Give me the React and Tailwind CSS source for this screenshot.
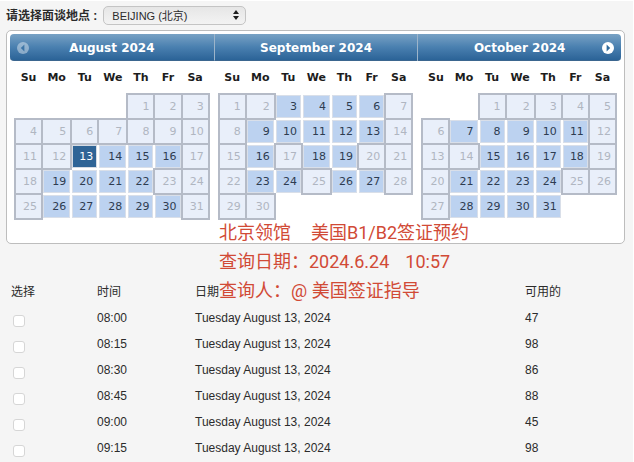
import React, { useState } from "react";

const WEEKDAYS = ["Su", "Mo", "Tu", "We", "Th", "Fr", "Sa"];

const MONTHS = [
  {
    name: "August 2024",
    offset: 4,
    days: 31,
    open: [13, 14, 15, 16, 19, 20, 21, 22, 26, 27, 28, 29, 30],
  },
  {
    name: "September 2024",
    offset: 0,
    days: 30,
    open: [3, 4, 5, 6, 9, 10, 11, 12, 13, 16, 18, 19, 23, 24, 26, 27],
  },
  {
    name: "October 2024",
    offset: 2,
    days: 31,
    open: [7, 8, 9, 10, 11, 15, 16, 17, 18, 21, 22, 23, 24, 28, 29, 30, 31],
  },
];

const SLOTS = [
  ["08:00", 47],
  ["08:15", 98],
  ["08:30", 86],
  ["08:45", 88],
  ["09:00", 45],
  ["09:15", 98],
];

function weeksOf({ offset, days }) {
  const cells = [...Array(offset).fill(null), ...Array.from({ length: days }, (_, i) => i + 1)];
  while (cells.length % 7) cells.push(null);
  const weeks = [];
  for (let i = 0; i < cells.length; i += 7) weeks.push(cells.slice(i, i + 7));
  return weeks;
}

function ArrowButton({ label, flip, disabled }) {
  return (
    <button
      type="button"
      aria-label={label}
      disabled={disabled}
      className={disabled ? "size-3 opacity-40" : "size-3"}
    >
      <svg viewBox="0 0 12 12" className={flip ? "size-3 -scale-x-100" : "size-3"}>
        <circle cx="6" cy="6" r="6" fill="#fff" />
        <path d="M4.6 2.6 L8.2 6 L4.6 9.4 Z" fill="#2f6a9d" />
      </svg>
    </button>
  );
}

function Day({ day, open, selected }) {
  if (day === null) return <td className="h-[25px] p-0" />;
  if (!open) {
    return (
      <td className="h-[25px] bg-[#e9effa] p-0 pr-[5px] text-right leading-[23px] text-[#b0b6c1] outline-2 -outline-offset-1 outline-[#b5bbc7]">
        {day}
      </td>
    );
  }
  return (
    <td className="h-[25px] p-px">
      <a
        href="#slots"
        className={
          selected
            ? "block h-[23px] border border-[#d5dbe4] bg-[#2f6496] pr-[3px] text-right leading-[21px] text-white"
            : "block h-[23px] border border-[#d9dfe9] bg-[#bcd2f0] pr-[3px] text-right leading-[21px] text-[#2e3c50]"
        }
      >
        {day}
      </a>
    </td>
  );
}

function Month({ month, index }) {
  const first = index === 0;
  const last = index === 2;
  return (
    <section className="min-w-0 flex-1">
      <header
        className={
          "grid h-[27px] grid-cols-[12px_1fr_12px] items-center border-b border-[#3b668f] bg-linear-to-b from-[#78a2c4] via-[#4a80b0] to-[#2b6397] px-[7px] pt-0.5 " +
          (first ? "rounded-l" : last ? "rounded-r border-l border-l-[#9cb4ca]" : "border-l border-l-[#9cb4ca]")
        }
      >
        {first ? <ArrowButton label="Prev" flip disabled /> : <span />}
        <h2 className="text-center text-xs font-bold text-white">{month.name}</h2>
        {last ? <ArrowButton label="Next" /> : <span />}
      </header>
      <div className="px-[5px]">
        <table className="w-full table-fixed border-separate border-spacing-0 text-[11px]">
          <colgroup>
            <col className="w-[14%]" />
            <col className="w-[15%]" />
            <col className="w-[14%]" />
            <col className="w-[15%]" />
            <col className="w-[14%]" />
            <col className="w-[14%]" />
            <col className="w-[14%]" />
          </colgroup>
          <thead>
            <tr>
              {WEEKDAYS.map((d) => (
                <th key={d} scope="col" className="h-[33px] p-0 pt-0.5 text-center font-bold text-[#1d1d1d]">
                  {d}
                </th>
              ))}
            </tr>
          </thead>
          <tbody>
            {weeksOf(month).map((week, w) => (
              <tr key={w}>
                {week.map((day, i) => (
                  <Day key={i} day={day} open={month.open.includes(day)} selected={first && day === 13} />
                ))}
              </tr>
            ))}
          </tbody>
        </table>
      </div>
    </section>
  );
}

export default function App() {
  const [place, setPlace] = useState("beijing");
  return (
    <main className="min-h-screen border-t border-r border-white bg-[#f5f5f5] pr-2 pl-1.5 font-['Liberation_Sans','Noto_Sans_CJK_SC',sans-serif] text-xs text-[#2b2b2b]">
      <div className="flex h-[29px] items-center gap-1.5">
        <label htmlFor="place" className="font-bold">
          请选择面谈地点 :
        </label>
        <div className="relative">
          <select
            id="place"
            value={place}
            onChange={(e) => setPlace(e.target.value)}
            className="block h-[19px] w-[143px] appearance-none rounded-[5px] border border-[#c4c4c4] bg-linear-to-b from-[#e6e6e6] to-[#f3f3f3] pl-2 text-[11px] leading-4"
          >
            <option value="beijing">BEIJING (北京)</option>
          </select>
          <svg viewBox="0 0 6 10" className="pointer-events-none absolute top-1 right-[7px] h-2.5 w-1.5">
            <path d="M3 0 L6 4 H0 Z M0 6 H6 L3 10 Z" fill="#1c1c1c" />
          </svg>
        </div>
      </div>

      <div className="relative">
        <div className="flex rounded-[5px] border border-[#bdbdbd] bg-white px-[3px] pt-[3px] pb-6 font-['DejaVu_Sans',sans-serif]">
          {MONTHS.map((m, i) => (
            <Month key={m.name} month={m} index={i} />
          ))}
        </div>
        <div className="absolute top-[188px] left-[213px] font-[Roboto,'Noto_Sans_CJK_SC',sans-serif] text-lg leading-[29px] whitespace-nowrap text-[#d14a36]">
          <p className="flex gap-5">
            <span>北京领馆</span>
            <span>美国B1/B2签证预约</span>
          </p>
          <p className="flex gap-4">
            <span>查询日期：2024.6.24</span>
            <span>10:57</span>
          </p>
          <p>查询人：@ 美国签证指导</p>
        </div>
      </div>

      <table id="slots" className="mt-[35px] w-full table-fixed border-collapse text-left">
        <colgroup>
          <col className="w-[91px]" />
          <col className="w-[98px]" />
          <col className="w-[330px]" />
          <col />
        </colgroup>
        <thead>
          <tr className="h-[26px]">
            <th className="p-0 pl-[5px] font-normal">选择</th>
            <th className="p-0 font-normal">时间</th>
            <th className="p-0 font-normal">日期</th>
            <th className="p-0 font-normal">可用的</th>
          </tr>
        </thead>
        <tbody>
          {SLOTS.map(([time, seats]) => (
            <tr key={time} className="h-[26px]">
              <td className="p-0 pt-1.5 pl-[7px]">
                <input
                  type="checkbox"
                  aria-label={time}
                  className="block size-3 appearance-none rounded-[3px] border border-[#d6d6d6] bg-white checked:bg-[#2f6496]"
                />
              </td>
              <td className="p-0">{time}</td>
              <td className="p-0">Tuesday August 13, 2024</td>
              <td className="p-0">{seats}</td>
            </tr>
          ))}
        </tbody>
      </table>
    </main>
  );
}
